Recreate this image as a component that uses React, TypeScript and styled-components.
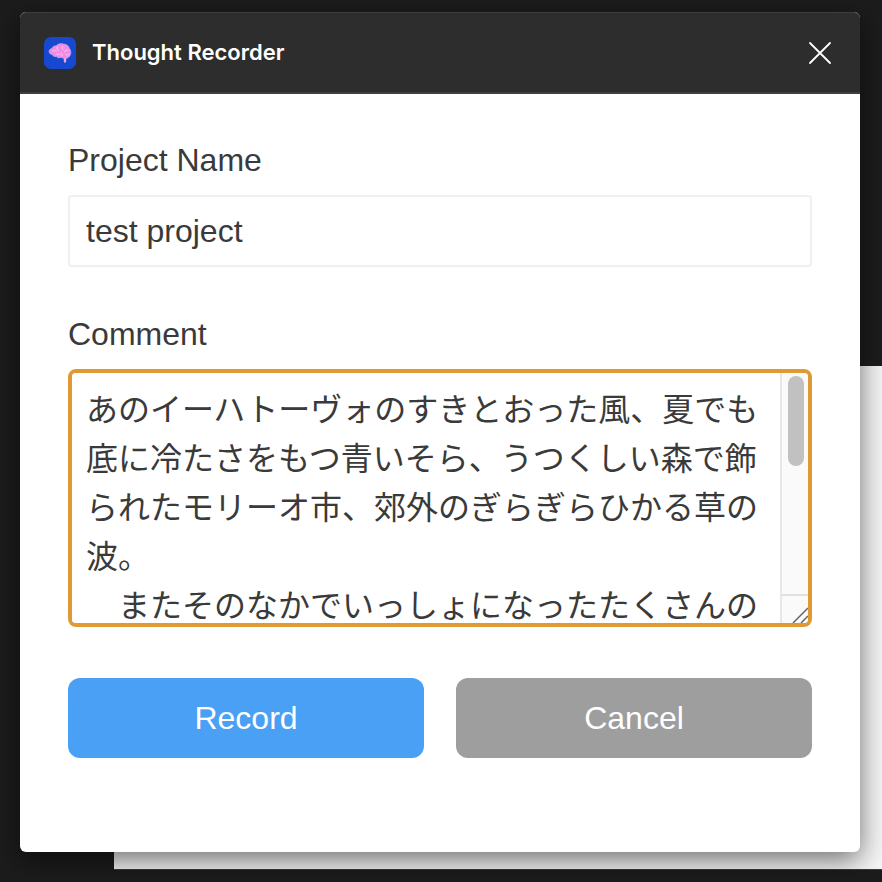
import React from "react";
import styled, { createGlobalStyle } from "styled-components";

const Global = createGlobalStyle`
  html, body { margin: 0; padding: 0; background: #1c1c1c; }
  #root { height: 882px; overflow: hidden; }
`;

const Desktop = styled.div`
  position: relative;
  width: 882px;
  height: 882px;
  padding: 12px 22px 30px 20px;
  box-sizing: border-box;
  background: #1c1c1c;
  overflow: hidden;
`;

const BackSheet = styled.div`
  position: absolute;
  left: 114px;
  top: 366px;
  right: 0;
  height: 503px;
  background: #f5f5f5;
  border-bottom: 1px solid #3a3a3a;
  box-sizing: content-box;
`;

const Modal = styled.section`
  position: relative;
  display: flex;
  flex-direction: column;
  height: 840px;
  border-radius: 6px;
  background: #fff;
  box-shadow: 0 8px 28px rgba(0, 0, 0, 0.55);
`;

const Header = styled.header`
  display: flex;
  align-items: center;
  gap: 16px;
  height: 82px;
  padding: 0 28px 0 24px;
  box-sizing: border-box;
  flex: none;
  background: #2d2d2d;
  border-top: 1px solid #3d3d3d;
  border-bottom: 2px solid #3f3f3f;
  border-radius: 6px 6px 0 0;
`;

const AppIcon = styled.div`
  width: 32px;
  height: 32px;
  flex: none;
  display: flex;
  border-radius: 7px;
  background: #1649d0;
`;

const Title = styled.h1`
  flex: 1;
  margin: 0 0 2px;
  font: 600 22px/1 Inter, "Liberation Sans", sans-serif;
  color: #fff;
`;

const CloseButton = styled.button`
  display: flex;
  padding: 0;
  border: 0;
  background: none;
`;

const Form = styled.form`
  display: flex;
  flex-direction: column;
  padding: 48px 48px 0;
  font-family: "Liberation Sans", "Noto Sans CJK JP", sans-serif;
`;

const Label = styled.label`
  display: block;
  font-size: 32px;
  line-height: 36px;
  color: #3a3a3a;
  margin-bottom: 17px;
`;

const NameInput = styled.input`
  display: block;
  width: 100%;
  height: 72px;
  padding: 0 16px;
  box-sizing: border-box;
  border: 2px solid #f0f0f0;
  border-radius: 4px;
  margin-bottom: 49px;
  font: 32px "Liberation Sans", sans-serif;
  color: #3a3a3a;
  outline: none;
`;

const CommentFrame = styled.div`
  display: flex;
  height: 258px;
  box-sizing: border-box;
  border: 4px solid #e09a35;
  border-radius: 8px;
  overflow: hidden;
`;

const Comment = styled.textarea`
  flex: 1;
  min-width: 0;
  height: 100%;
  padding: 13px 0 0 14px;
  box-sizing: border-box;
  border: 0;
  font: 32px/49px "Liberation Sans", "Noto Sans CJK JP", sans-serif;
  color: #3a3a3a;
  outline: none;
  resize: none;
  overflow: hidden;
`;

const ScrollTrack = styled.div`
  flex: none;
  display: flex;
  flex-direction: column;
  width: 28px;
  box-sizing: border-box;
  padding-top: 3px;
  background: #fafafa;
  border-left: 2px solid #e8e8e8;
`;

const ScrollThumb = styled.div`
  width: 16px;
  height: 90px;
  margin-left: 6px;
  border-radius: 8px;
  background: #c1c1c1;
`;

const ResizeCorner = styled.div`
  display: flex;
  align-items: flex-end;
  justify-content: flex-end;
  margin-top: auto;
  height: 29px;
  box-sizing: border-box;
  border-top: 2px solid #e0e0e0;
`;

const Actions = styled.div`
  display: grid;
  grid-template-columns: 1fr 1fr;
  gap: 32px;
  margin-top: 51px;
`;

const ActionButton = styled.button<{ $tone: string }>`
  height: 80px;
  border: 0;
  border-radius: 12px;
  background: ${(p) => p.$tone};
  color: #fff;
  font: 32px "Liberation Sans", sans-serif;
`;

const text =
  "あのイーハトーヴォのすきとおった風、夏でも底に冷たさをもつ青いそら、うつくしい森で飾られたモリーオ市、郊外のぎらぎらひかる草の波。\n　またそのなかでいっしょになったたくさんのひとたち、ファゼーロとロザーロ、羊飼のミーロや、顔の赤いこどもたち、地主のテーモ、山猫博士のボーガント・デストゥパーゴなど、いまこの暗い巨きな室にいるのです。";

const BrainIcon = () => (
  <svg width="32" height="32" viewBox="0 0 32 32" fill="none">
    <path
      d="M5 14.500C5 12.800 6.500 11.500 8 11.500 8.500 9.500 10.500 8.500 12 9 13.500 6.800 17 6 19.500 7 22.500 7 25 9 25.500 11.500 27 13 27.300 15.500 26.500 17.500 26 19.500 24.300 21.200 22 21.200L19 21 16.500 20.500C15 21.300 13 20.800 12.500 19.500 10.500 20 8.500 19 8.200 17.500 6.500 17.500 5 16.200 5 14.500Z"
      fill="#f28ae6"
      stroke="#9fc0f5"
      strokeWidth="0.500"
    />
    <path
      d="M8.500 14c1.500-1 3-.6 4 .5M13 10c-.5 1.500 0 3 1.500 3.500M19 9c-1 1-1 2.500 0 3.500M24 13c-1.500 0-3 .5-3.500 2M12 18c1-1.500 3-1.500 4-.5M17 15.500c1 .5 1.500 2 1 3.500M22 17.500c1 .5 2 .5 3 0"
      stroke="#fcc8f4"
      strokeWidth="0.900"
      strokeLinecap="round"
    />
    <path d="M19.500 21h3l-.4 3.500-.6 1.300h-1l-.6-1.300z" fill="#f0a0e6" />
  </svg>
);

export default function App() {
  return (
    <Desktop>
      <Global />
      <BackSheet />
      <Modal>
        <Header>
          <AppIcon>
            <BrainIcon />
          </AppIcon>
          <Title>Thought Recorder</Title>
          <CloseButton type="button" aria-label="Close">
            <svg width="24" height="24" viewBox="0 0 24 24" fill="none" stroke="#fff" strokeWidth="1.800" strokeLinecap="round">
              <path d="M2 2 22 22M22 2 2 22" />
            </svg>
          </CloseButton>
        </Header>
        <Form>
          <Label>Project Name</Label>
          <NameInput defaultValue="test project" />
          <Label>Comment</Label>
          <CommentFrame>
            <Comment defaultValue={text} />
            <ScrollTrack>
              <ScrollThumb />
              <ResizeCorner>
                <svg width="16" height="16" viewBox="0 0 16 16" fill="none" stroke="#666" strokeWidth="1.500">
                  <path d="M1 16 16 1M9 16 16 9" />
                </svg>
              </ResizeCorner>
            </ScrollTrack>
          </CommentFrame>
          <Actions>
            <ActionButton type="button" $tone="#4aa0f5">Record</ActionButton>
            <ActionButton type="button" $tone="#9e9e9e">Cancel</ActionButton>
          </Actions>
        </Form>
      </Modal>
    </Desktop>
  );
}
